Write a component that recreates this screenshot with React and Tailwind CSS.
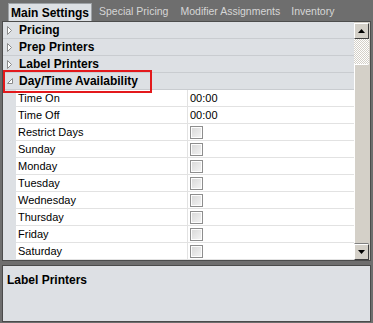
const categories = ['Pricing', 'Prep Printers', 'Label Printers']

const props = [
  { name: 'Time On', value: '00:00' },
  { name: 'Time Off', value: '00:00' },
  { name: 'Restrict Days', check: true },
  { name: 'Sunday', check: true },
  { name: 'Monday', check: true },
  { name: 'Tuesday', check: true },
  { name: 'Wednesday', check: true },
  { name: 'Thursday', check: true },
  { name: 'Friday', check: true },
  { name: 'Saturday', check: true },
]

function Collapsed() {
  return (
    <svg width="7" height="11" viewBox="0 0 7 11" className="shrink-0">
      <path d="M1.5 1.5 L5.5 5.5 L1.5 9.5 Z" fill="#fff" stroke="#8a8a8a" strokeWidth="1" />
    </svg>
  )
}

function Expanded() {
  return (
    <svg width="8" height="8" viewBox="0 0 8 8" className="shrink-0">
      <path d="M6.5 1.5 L6.5 6.5 L1.5 6.5 Z" fill="#fff" stroke="#8a8a8a" strokeWidth="1" />
    </svg>
  )
}

function Checkbox() {
  return (
    <span className="block h-[13px] w-[13px] border border-[#8e8e8e] bg-[#f4f4f4]">
      <span className="block h-full w-full border border-[#fdfdfd] bg-gradient-to-br from-[#dadada] to-[#f2f2f2]" />
    </span>
  )
}

function ScrollBtn({ up }) {
  return (
    <div className="flex h-[16px] w-[15px] items-center justify-center border border-t-[#fff] border-l-[#fff] border-r-[#404040] border-b-[#404040] bg-[#d4d0c8]">
      <svg width="7" height="4" viewBox="0 0 7 4">
        <path d={up ? 'M0 4 L3.5 0 L7 4 Z' : 'M0 0 L7 0 L3.5 4 Z'} fill="#000" />
      </svg>
    </div>
  )
}

export default function App() {
  return (
    <div className="relative flex h-[323px] w-[373px] flex-col overflow-hidden bg-[#6e6e6e] font-['Liberation_Sans',Arial,sans-serif]">
      {/* tabs */}
      <div className="flex h-[21px] items-end pl-[8px]">
        <div className="flex h-[18px] w-[84px] items-center justify-center border-t border-l border-r border-[#9ea2a6] bg-[#dde0e4] text-[12px] font-bold text-black">
          Main Settings
        </div>
        <div className="flex h-[18px] items-center text-[10.5px] text-[#d6d6d6]">
          <span className="ml-[7px]">Special Pricing</span>
          <span className="ml-[12px]">Modifier Assignments</span>
          <span className="ml-[11px]">Inventory</span>
        </div>
      </div>

      {/* property grid */}
      <div className="ml-[2px] flex h-[240px] w-[369px] border border-[#4c4c4c]">
        <div className="flex flex-1 flex-col">
          {categories.map((c) => (
            <div key={c} className="flex h-[17px] items-center border-b border-[#c9ccd0] bg-[#dde0e4] pl-[3px] text-[12px] font-bold text-black">
              <Collapsed />
              <span className="ml-[6px]">{c}</span>
            </div>
          ))}
          <div className="flex h-[17px] items-center border-b border-[#c9ccd0] bg-[#dde0e4] pl-[3px] text-[12px] font-bold text-black">
            <Expanded />
            <span className="ml-[5px]">Day/Time Availability</span>
          </div>
          {props.map((p) => (
            <div key={p.name} className="flex h-[17px] bg-[#dde0e4] text-[11px] text-black">
              <div className="ml-[13px] flex w-[171px] items-center border-b border-[#e2e2e2] bg-white pl-[2px]">
                {p.name}
              </div>
              <div className="flex flex-1 items-center border-b border-l border-[#e2e2e2] bg-white pl-[2px]">
                {p.check ? <Checkbox /> : p.value}
              </div>
            </div>
          ))}
        </div>
        <div className="flex w-[16px] flex-col bg-[#d4d0c8] pt-[1px]">
          <ScrollBtn up />
          <div className="h-[25px] w-[15px] bg-[repeating-conic-gradient(#d4d0c8_0_25%,#ffffff_0_50%)] bg-[length:2px_2px]" />
          <div className="w-[15px] flex-1 border border-t-[#fff] border-l-[#fff] border-r-[#d4d0c8] border-b-[#808080] bg-[#d4d0c8]" />
          <ScrollBtn />
        </div>
      </div>

      {/* description */}
      <div className="ml-[2px] mt-[4px] h-[57px] w-[369px] border border-[#4a4a4a] bg-[#dde0e4] px-[4px] pt-[5px]">
        <div className="text-[12px] font-bold text-black">Label Printers</div>
      </div>

      {/* annotation */}
      <div className="absolute left-[3px] top-[70px] h-[23px] w-[149px] border-2 border-[#e3191c]" />
    </div>
  )
}
